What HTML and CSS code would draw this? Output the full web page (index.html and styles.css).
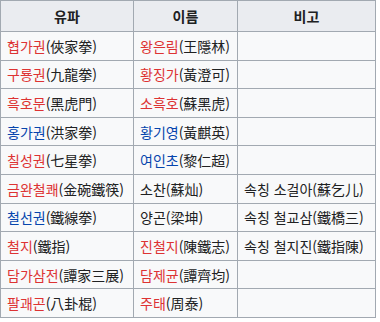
FILE: index.html
```html
<!DOCTYPE html>
<html lang="ko">
<head>
  <meta charset="UTF-8">
  <meta name="viewport" content="width=device-width, initial-scale=1.0">
  <title>유파</title>
  <link rel="stylesheet" href="styles.css">
</head>
<body>
  <table class="wikitable">
    <thead>
      <tr>
        <th class="col-school">유파</th>
        <th class="col-name">이름</th>
        <th class="col-note">비고</th>
      </tr>
    </thead>
    <tbody>
      <tr>
        <td><a class="new" href="#">협가권</a>(俠家拳)</td>
        <td><a class="new" href="#">왕은림</a>(王隱林)</td>
        <td></td>
      </tr>
      <tr>
        <td><a class="new" href="#">구룡권</a>(九龍拳)</td>
        <td><a class="new" href="#">황징가</a>(黃澄可)</td>
        <td></td>
      </tr>
      <tr>
        <td><a class="new" href="#">흑호문</a>(黑虎門)</td>
        <td><a class="new" href="#">소흑호</a>(蘇黑虎)</td>
        <td></td>
      </tr>
      <tr>
        <td><a href="#">홍가권</a>(洪家拳)</td>
        <td><a href="#">황기영</a>(黃麒英)</td>
        <td></td>
      </tr>
      <tr>
        <td><a class="new" href="#">칠성권</a>(七星拳)</td>
        <td><a href="#">여인초</a>(黎仁超)</td>
        <td></td>
      </tr>
      <tr>
        <td><a class="new" href="#">금완철쾌</a>(金碗鐵筷)</td>
        <td>소찬(蘇灿)</td>
        <td>속칭 소걸아(蘇乞儿)</td>
      </tr>
      <tr>
        <td><a href="#">철선권</a>(鐵線拳)</td>
        <td>양곤(梁坤)</td>
        <td>속칭 철교삼(鐵橋三)</td>
      </tr>
      <tr>
        <td><a class="new" href="#">철지</a>(鐵指)</td>
        <td><a class="new" href="#">진철지</a>(陳鐵志)</td>
        <td>속칭 철지진(鐵指陳)</td>
      </tr>
      <tr>
        <td><a class="new" href="#">담가삼전</a>(譚家三展)</td>
        <td><a class="new" href="#">담제균</a>(譚齊均)</td>
        <td></td>
      </tr>
      <tr>
        <td><a class="new" href="#">팔괘곤</a>(八卦棍)</td>
        <td><a class="new" href="#">주태</a>(周泰)</td>
        <td></td>
      </tr>
    </tbody>
  </table>
</body>
</html>
```

FILE: styles.css
```css
/* styles.css */
body {
  margin: 0;
  background-color: #ffffff;
  font-family: "Noto Sans CJK KR", "Noto Sans", sans-serif;
  font-size: 14px;
  color: #202122;
}

.wikitable {
  border-collapse: collapse;
  border: 1px solid #a2a9b1;
  background-color: #f8f9fa;
  color: #202122;
}

.wikitable th,
.wikitable td {
  border: 1px solid #a2a9b1;
  padding: 0 6px;
  height: 27.6px;
  line-height: 20px;
  white-space: nowrap;
}

.wikitable th {
  background-color: #eaecf0;
  text-align: center;
  font-weight: bold;
  height: 30px;
}

.col-school {
  width: 120px;
}

.col-name {
  width: 91px;
}

.col-note {
  width: 125px;
}

a {
  color: #0645ad;
  text-decoration: none;
}

a.new {
  color: #dd3333;
}
```
